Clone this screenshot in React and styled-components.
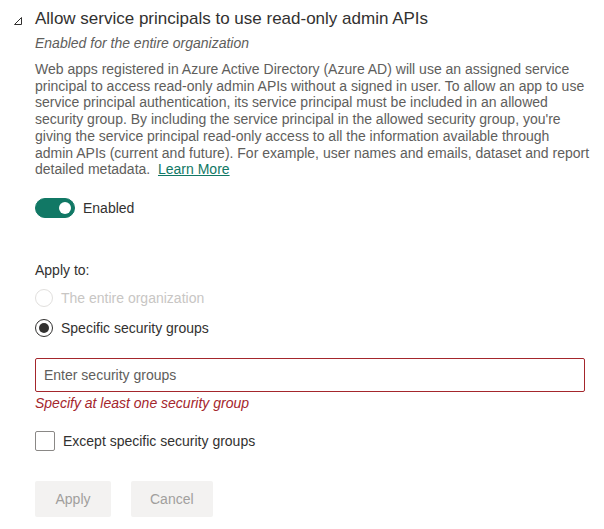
import React, { useState } from "react";
import styled, { createGlobalStyle } from "styled-components";

const GlobalStyle = createGlobalStyle`
  body {
    margin: 0;
    background: #ffffff;
    font-family: "Liberation Sans", Arial, sans-serif;
    color: #323130;
  }
`;

const description = [
  "Web apps registered in Azure Active Directory (Azure AD) will use an assigned service",
  "principal to access read-only admin APIs without a signed in user. To allow an app to use",
  "service principal authentication, its service principal must be included in an allowed",
  "security group. By including the service principal in the allowed security group, you're",
  "giving the service principal read-only access to all the information available through",
  "admin APIs (current and future). For example, user names and emails, dataset and report",
];

const App = () => {
  const [enabled, setEnabled] = useState(true);
  const [except, setExcept] = useState(false);

  return (
    <>
      <GlobalStyle />
      <Page>
        <Chevron>
          <svg width="8" height="8" viewBox="0 0 8 8">
            <path d="M7.5 0.5 L7.5 7.5 L0.5 7.5 Z" fill="none" stroke="#323130" strokeWidth="1" />
          </svg>
        </Chevron>
        <Content>
          <Title>Allow service principals to use read-only admin APIs</Title>
          <Subtitle>Enabled for the entire organization</Subtitle>
          <Description>
            {description.map((line, i) => (
              <Line key={i}>{line}</Line>
            ))}
            <Line>
              detailed metadata.&nbsp; <Link href="#">Learn More</Link>
            </Line>
          </Description>

          <ToggleRow onClick={() => setEnabled(!enabled)}>
            <Track on={enabled}>
              <Knob />
            </Track>
            <span>Enabled</span>
          </ToggleRow>

          <Label>Apply to:</Label>
          <RadioRow disabled>
            <RadioCircle disabled />
            <span>The entire organization</span>
          </RadioRow>
          <RadioRow>
            <RadioCircle checked />
            <span>Specific security groups</span>
          </RadioRow>

          <GroupInput placeholder="Enter security groups" />
          <ErrorText>Specify at least one security group</ErrorText>

          <CheckRow onClick={() => setExcept(!except)}>
            <CheckBox />
            <span>Except specific security groups</span>
          </CheckRow>

          <Buttons>
            <Button disabled>Apply</Button>
            <Button disabled>Cancel</Button>
          </Buttons>
        </Content>
      </Page>
    </>
  );
};

const Page = styled.div`
  display: flex;
  padding: 8px 0 0 14px;
`;

const Chevron = styled.div`
  width: 21px;
  padding-top: 9px;
  flex-shrink: 0;
  svg {
    display: block;
  }
`;

const Content = styled.div`
  display: flex;
  flex-direction: column;
  align-items: flex-start;
  width: 550px;
`;

const Title = styled.div`
  font-size: 17px;
  line-height: 22px;
  color: #323130;
`;

const Subtitle = styled.div`
  font-size: 14px;
  font-style: italic;
  line-height: 18px;
  margin-top: 4px;
  color: #605e5c;
`;

const Description = styled.div`
  margin-top: 9px;
  font-size: 14px;
  line-height: 16.7px;
  color: #605e5c;
`;

const Line = styled.div`
  white-space: nowrap;
`;

const Link = styled.a`
  color: #117865;
  text-decoration: underline;
`;

const ToggleRow = styled.div`
  display: flex;
  align-items: center;
  gap: 8px;
  margin-top: 20px;
  height: 20px;
  font-size: 14px;
  color: #323130;
  cursor: pointer;
`;

const Track = styled.div`
  width: 40px;
  height: 20px;
  box-sizing: border-box;
  border-radius: 10px;
  background: ${(p) => (p.on ? "#117865" : "#ffffff")};
  border: 1px solid ${(p) => (p.on ? "#117865" : "#605e5c")};
  display: flex;
  align-items: center;
  justify-content: ${(p) => (p.on ? "flex-end" : "flex-start")};
  padding: 0 3px;
`;

const Knob = styled.div`
  width: 12px;
  height: 12px;
  border-radius: 50%;
  background: #ffffff;
`;

const Label = styled.div`
  margin-top: 42px;
  font-size: 14px;
  line-height: 20px;
  color: #323130;
`;

const RadioRow = styled.div`
  display: flex;
  align-items: center;
  gap: 8px;
  height: 20px;
  margin-top: ${(p) => (p.disabled ? "8px" : "10px")};
  font-size: 14px;
  color: ${(p) => (p.disabled ? "#c8c6c4" : "#323130")};
`;

const RadioCircle = styled.div`
  width: 18px;
  height: 18px;
  box-sizing: border-box;
  border-radius: 50%;
  border: 1px solid ${(p) => (p.disabled ? "#e1dfdd" : "#323130")};
  display: flex;
  align-items: center;
  justify-content: center;
  &::after {
    content: "";
    display: ${(p) => (p.checked ? "block" : "none")};
    width: 10px;
    height: 10px;
    border-radius: 50%;
    background: #323130;
  }
`;

const GroupInput = styled.input`
  margin-top: 20px;
  width: 550px;
  height: 34px;
  box-sizing: border-box;
  border: 1px solid #a4262c;
  border-radius: 2px;
  padding: 0 8px;
  font-family: inherit;
  font-size: 14px;
  color: #323130;
  outline: none;
  &::placeholder {
    color: #605e5c;
  }
`;

const ErrorText = styled.div`
  margin-top: 2px;
  font-size: 14px;
  font-style: italic;
  line-height: 18px;
  color: #a4262c;
`;

const CheckRow = styled.div`
  display: flex;
  align-items: center;
  gap: 8px;
  margin-top: 19px;
  height: 20px;
  font-size: 14px;
  color: #323130;
  cursor: pointer;
`;

const CheckBox = styled.div`
  width: 20px;
  height: 20px;
  box-sizing: border-box;
  border: 1px solid #8a8886;
  border-radius: 2px;
`;

const Buttons = styled.div`
  display: flex;
  gap: 20px;
  margin-top: 30px;
`;

const Button = styled.button`
  height: 36px;
  padding: 0 19px;
  min-width: 76px;
  border: none;
  border-radius: 2px;
  background: #f3f2f1;
  color: #a19f9d;
  font-family: inherit;
  font-size: 14px;
`;

export default App;
